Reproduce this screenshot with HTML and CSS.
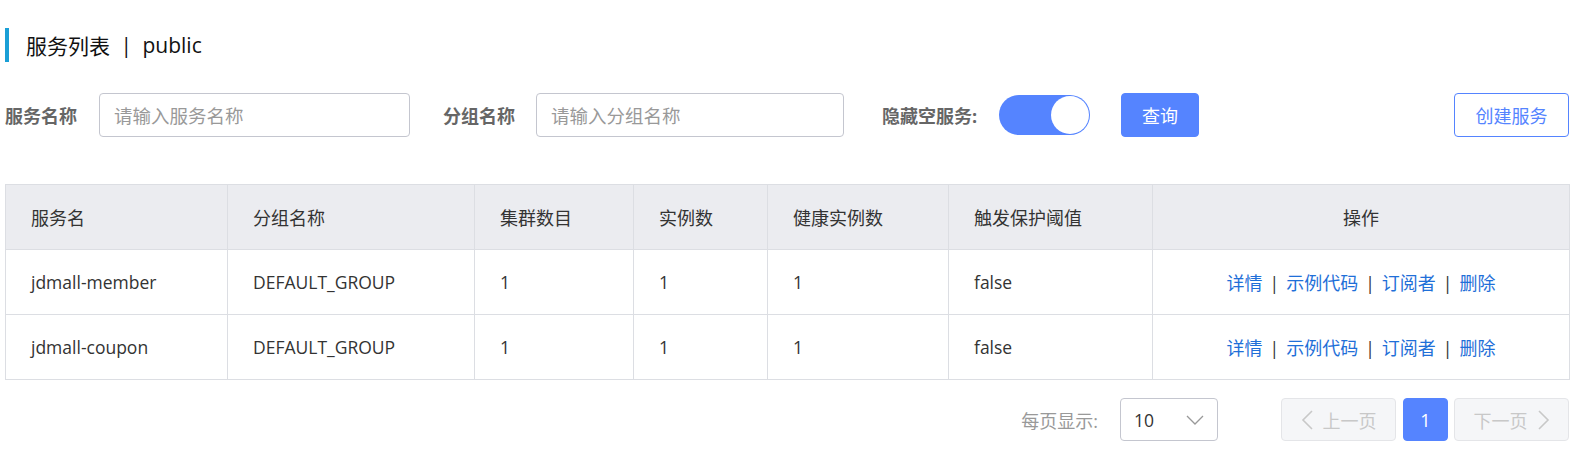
FILE: index.html
```html
<!DOCTYPE html>
<html lang="zh-CN">
<head>
<meta charset="utf-8">
<title>服务列表</title>
<link rel="stylesheet" href="styles.css">
</head>
<body>
<div class="page">
  <div class="title">服务列表 <span class="title-sep">|</span> public</div>

  <div class="filters">
    <label class="label label-name">服务名称</label>
    <input class="input input-name" type="text" placeholder="请输入服务名称">
    <label class="label label-group">分组名称</label>
    <input class="input input-group" type="text" placeholder="请输入分组名称">
    <label class="label label-hide">隐藏空服务:</label>
    <div class="switch"><span class="knob"></span></div>
    <button class="btn btn-primary">查询</button>
    <button class="btn btn-outline">创建服务</button>
  </div>

  <table class="grid">
    <colgroup>
      <col style="width:222px"><col style="width:247px"><col style="width:159px"><col style="width:134px"><col style="width:181px"><col style="width:204px"><col style="width:417px">
    </colgroup>
    <thead>
      <tr>
        <th>服务名</th><th>分组名称</th><th>集群数目</th><th>实例数</th><th>健康实例数</th><th>触发保护阈值</th><th class="center">操作</th>
      </tr>
    </thead>
    <tbody>
      <tr>
        <td>jdmall-member</td><td>DEFAULT_GROUP</td><td>1</td><td>1</td><td>1</td><td>false</td>
        <td class="center"><a class="link">详情</a><span class="sep">|</span><a class="link">示例代码</a><span class="sep">|</span><a class="link">订阅者</a><span class="sep">|</span><a class="link">删除</a></td>
      </tr>
      <tr>
        <td>jdmall-coupon</td><td>DEFAULT_GROUP</td><td>1</td><td>1</td><td>1</td><td>false</td>
        <td class="center"><a class="link">详情</a><span class="sep">|</span><a class="link">示例代码</a><span class="sep">|</span><a class="link">订阅者</a><span class="sep">|</span><a class="link">删除</a></td>
      </tr>
    </tbody>
  </table>

  <div class="pager">
    <span class="pager-label">每页显示:</span>
    <div class="select"><span>10</span>
      <svg class="caret" width="18" height="10" viewBox="0 0 18 10"><polyline points="1,1 9,9 17,1" fill="none" stroke="#999" stroke-width="1.3"/></svg>
    </div>
    <button class="pg pg-prev" disabled>
      <svg width="12" height="20" viewBox="0 0 12 20"><polyline points="11,1 2,10 11,19" fill="none" stroke="#c8c8c8" stroke-width="1.6"/></svg>
      <span>上一页</span>
    </button>
    <button class="pg pg-cur">1</button>
    <button class="pg pg-next" disabled>
      <span>下一页</span>
      <svg width="12" height="20" viewBox="0 0 12 20"><polyline points="1,1 10,10 1,19" fill="none" stroke="#c8c8c8" stroke-width="1.6"/></svg>
    </button>
  </div>
</div>
</body>
</html>
```
FILE: styles.css
```css
* { box-sizing: border-box; }

body {
  margin: 0;
  background: #fff;
  color: #333;
  font-family: "Open Sans", "Noto Sans CJK SC", sans-serif;
  font-size: 17.5px;
}

.page {
  padding: 28px 9px 0 5px;
}

.title {
  height: 34px;
  display: flex;
  align-items: center;
  border-left: 4px solid #1a9fd6;
  padding-left: 17px;
  font-size: 21px;
  color: #111;
  white-space: pre;
}

.title-sep {
  margin: 0 5px;
}

.filters {
  display: flex;
  align-items: center;
  margin-top: 31px;
  height: 44px;
}

.label {
  font-weight: bold;
  color: #666;
  font-size: 18px;
}

.label-name { width: 94px; }
.label-group { width: 93px; margin-left: 33px; }
.label-hide { width: 117px; margin-left: 38px; }

.input {
  height: 44px;
  border: 1px solid #c4c6cf;
  border-radius: 4px;
  padding: 0 14px;
  font-family: inherit;
  font-size: 18.5px;
  color: #333;
  outline: none;
}

.input::placeholder { color: #999; }

.input-name { width: 311px; }
.input-group { width: 308px; }

.switch {
  width: 91px;
  height: 40px;
  border-radius: 20px;
  background: #5584ff;
  display: flex;
  align-items: center;
  justify-content: flex-end;
  padding: 1px;
}

.knob {
  width: 38px;
  height: 38px;
  border-radius: 50%;
  background: #fff;
}

.btn {
  height: 44px;
  border-radius: 4px;
  font-family: inherit;
  font-size: 18px;
  cursor: pointer;
}

.btn-primary {
  width: 78px;
  margin-left: 31px;
  background: #5584ff;
  border: 1px solid #5584ff;
  color: #fff;
}

.btn-outline {
  width: 115px;
  margin-left: auto;
  background: #fff;
  border: 1px solid #5584ff;
  color: #5584ff;
}

.grid {
  margin-top: 47px;
  width: 100%;
  table-layout: fixed;
  border-collapse: collapse;
  border: 1px solid #dcdee3;
}

.grid th,
.grid td {
  height: 65px;
  padding: 0 0 0 25px;
  border: 1px solid #dcdee3;
  text-align: left;
  font-weight: normal;
  color: #333;
  white-space: nowrap;
}

.grid th {
  background: #ebecf0;
  font-size: 18px;
}

.grid .center {
  text-align: center;
  padding-left: 0;
}

.link {
  color: #1f6fd8;
  font-size: 18px;
  cursor: pointer;
}

.sep {
  margin: 0 7px;
  color: #333;
}

.pager {
  display: flex;
  justify-content: flex-end;
  align-items: center;
  margin-top: 18px;
}

.pager-label {
  color: #999;
  font-size: 18px;
  margin-right: 22px;
}

.select {
  width: 98px;
  height: 43px;
  border: 1px solid #c4c6cf;
  border-radius: 4px;
  display: flex;
  align-items: center;
  justify-content: space-between;
  padding: 0 13px 0 13px;
  color: #333;
}

.pg {
  height: 43px;
  border-radius: 4px;
  font-family: inherit;
  font-size: 18px;
  display: flex;
  align-items: center;
  justify-content: center;
  gap: 10px;
}

.pg-prev,
.pg-next {
  width: 115px;
  background: #f5f6f8;
  border: 1px solid #e4e5e8;
  color: #c8c8c8;
}

.pg-prev { margin-left: 63px; }

.pg-cur {
  width: 45px;
  margin: 0 6px 0 7px;
  background: #5584ff;
  border: 1px solid #5584ff;
  color: #fff;
}
```
